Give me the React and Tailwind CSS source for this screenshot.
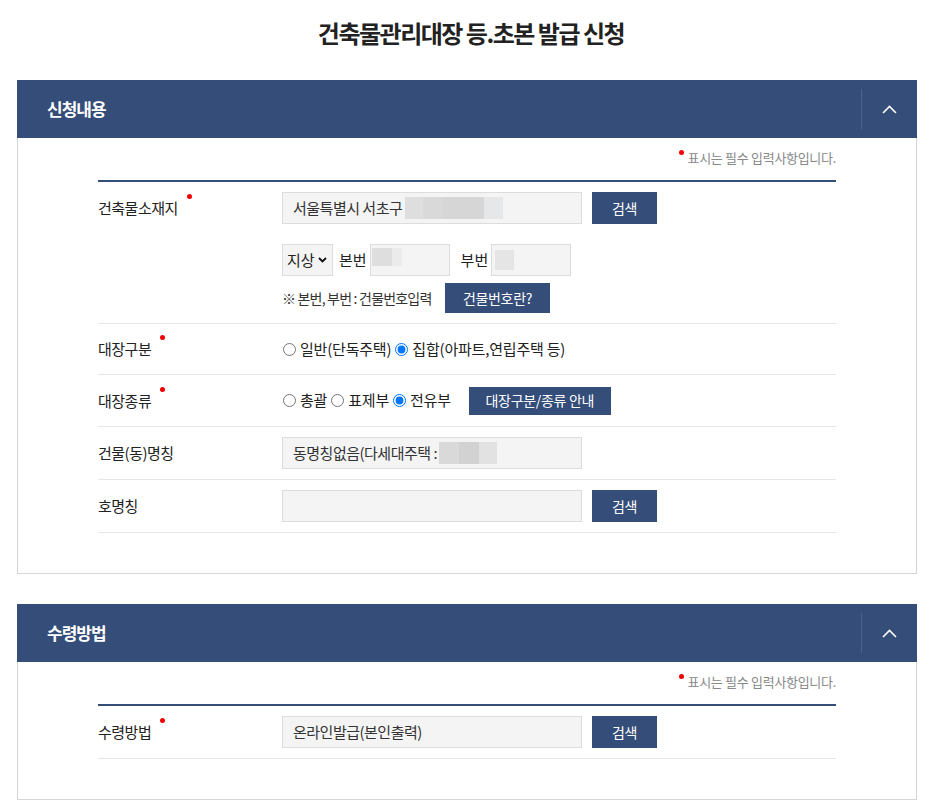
import { useState } from 'react';

const FONT = "font-['Noto_Sans_CJK_KR','Noto_Sans',sans-serif]";

function Dot({ className = '' }) {
  return <span className={`absolute w-[5px] h-[5px] rounded-full bg-[#f00000] ${className}`} />;
}

function Label({ children, required, h }) {
  return (
    <div className={`w-[184px] shrink-0 flex items-center ${h}`}>
      <span className="relative text-[15px] leading-[20px] tracking-[-0.5px] text-[#222]">
        {children}
        {required && <Dot className="-right-[14px] -top-[4px]" />}
      </span>
    </div>
  );
}

function NavyButton({ children, className = '' }) {
  return (
    <button className={`bg-[#344d79] text-white text-[14px] tracking-[-0.3px] flex items-center justify-center ${className}`}>
      {children}
    </button>
  );
}

function TextBox({ children, className = 'w-[300px]' }) {
  return (
    <div className={`h-[32px] border border-[#dcdcdc] bg-[#f4f4f4] flex items-center px-[10px] text-[15px] tracking-[-0.5px] text-[#333] ${className}`}>
      {children}
    </div>
  );
}

function Blur({ w, c, h = 'h-[22px]' }) {
  return <span className={`inline-block ${h} ${w} ${c}`} />;
}

function Radio({ checked, label, name }) {
  return (
    <label className="flex items-center text-[15px] tracking-[-0.2px] text-[#222]">
      <input type="radio" name={name} defaultChecked={checked} className="w-[13px] h-[13px] ml-[1px] mr-[4px] accent-[#0075ff]" />
      <span className="mr-[3px]">{label}</span>
    </label>
  );
}

function Row({ label, required, children, h = 'h-[32px]' }) {
  return (
    <div className="flex py-[10px] border-b border-[#e6e6e6]">
      <Label required={required} h={h}>{label}</Label>
      <div className="flex-1">{children}</div>
    </div>
  );
}

function Panel({ title, children }) {
  const [open, setOpen] = useState(true);
  return (
    <section className="w-[900px]">
      <div className="h-[58px] bg-[#344d79] flex items-center">
        <h2 className="flex-1 pl-[30px] text-white text-[17px] font-bold tracking-[-1px]">{title}</h2>
        <button
          onClick={() => setOpen(!open)}
          className="w-[56px] h-[40px] border-l border-[#4c6290] flex items-center justify-center"
        >
          <svg width="15" height="9" viewBox="0 0 15 9" fill="none">
            <polyline points="1,8 7.5,1.5 14,8" stroke="white" strokeWidth="1.6" />
          </svg>
        </button>
      </div>
      {open && (
        <div className="border border-t-0 border-[#d6d6d6] px-[80px] pt-[11px] pb-[40px]">
          <p className="text-right text-[13px] leading-[18px] tracking-[-0.3px] text-[#888]">
            <span className="relative inline-block w-[8px] h-[10px] mr-[1px]">
              <Dot className="left-0 -top-[3px]" />
            </span>
            표시는 필수 입력사항입니다.
          </p>
          <div className="mt-[13px] border-t-2 border-[#344d79]">{children}</div>
        </div>
      )}
    </section>
  );
}

export default function App() {
  return (
    <div className={`min-h-screen bg-white pb-[12px] ${FONT}`}>
      <h1 className="pt-[18px] text-center text-[24px] leading-[30px] font-bold tracking-[-1.5px] text-[#222]">
        건축물관리대장 등.초본 발급 신청
      </h1>

      <div className="ml-[17px] mt-[32px] flex flex-col gap-[30px]">
        <Panel title="신청내용">
          <Row label="건축물소재지" required>
            <div className="flex">
              <TextBox>
                <span className="mr-[3px]">서울특별시 서초구</span>
                <Blur w="w-[18px]" c="bg-[#dedede]" />
                <Blur w="w-[20px]" c="bg-[#d9d9d9]" />
                <Blur w="w-[41px]" c="bg-[#d6d6d6]" />
                <Blur w="w-[19px]" c="bg-[#e6e7e9]" />
              </TextBox>
              <NavyButton className="ml-[10px] w-[65px] h-[32px]">검색</NavyButton>
            </div>
            <div className="flex items-center mt-[20px] text-[15px] text-[#222]">
              <div className="w-[51px] h-[32px] border border-[#dcdcdc] bg-[#f4f4f4] flex items-center pl-[4px] gap-[3px]">
                <span>지상</span>
                <svg width="9" height="6" viewBox="0 0 9 6" fill="none">
                  <polyline points="1,1 4.5,4.5 8,1" stroke="#111" strokeWidth="1.8" />
                </svg>
              </div>
              <span className="ml-[6px] mr-[3px]">본번</span>
              <div className="w-[80px] h-[32px] border border-[#dcdcdc] bg-[#f4f4f4] flex items-start pt-[3px] pl-[1px]">
                <Blur w="w-[20px]" c="bg-[#dedede]" h="h-[18px]" />
                <Blur w="w-[10px]" c="bg-[#ebebeb]" h="h-[18px]" />
              </div>
              <span className="ml-[11px] mr-[3px]">부번</span>
              <div className="w-[80px] h-[32px] border border-[#dcdcdc] bg-[#f4f4f4] flex items-center pl-[3px]">
                <Blur w="w-[19px]" c="bg-[#e5e5e5]" h="h-[20px]" />
              </div>
            </div>
            <div className="flex items-center mt-[7px]">
              <span className="text-[14px] tracking-[-0.8px] text-[#333] w-[163px]">※ 본번, 부번 : 건물번호입력</span>
              <NavyButton className="w-[105px] h-[30px]">건물번호란?</NavyButton>
            </div>
          </Row>

          <Row label="대장구분" required h="h-[30px]">
            <div className="flex items-center h-[30px]">
              <Radio name="g" label="일반(단독주택)" />
              <Radio name="g" label="집합(아파트,연립주택 등)" checked />
            </div>
          </Row>

          <Row label="대장종류" required h="h-[31px]">
            <div className="flex items-center h-[31px]">
              <Radio name="t" label="총괄" />
              <Radio name="t" label="표제부" />
              <Radio name="t" label="전유부" checked />
              <NavyButton className="ml-[15px] w-[142px] h-[28px]">대장구분/종류 안내</NavyButton>
            </div>
          </Row>

          <Row label="건물(동)명칭">
            <TextBox>
              <span className="mr-[2px]">동명칭없음(다세대주택 :</span>
              <Blur w="w-[20px]" c="bg-[#d9d9d9]" />
              <Blur w="w-[20px]" c="bg-[#d2d2d2]" />
              <Blur w="w-[18px]" c="bg-[#e2e2e2]" />
            </TextBox>
          </Row>

          <Row label="호명칭">
            <div className="flex">
              <TextBox />
              <NavyButton className="ml-[10px] w-[65px] h-[32px]">검색</NavyButton>
            </div>
          </Row>
        </Panel>

        <Panel title="수령방법">
          <Row label="수령방법" required>
            <div className="flex">
              <TextBox>온라인발급(본인출력)</TextBox>
              <NavyButton className="ml-[10px] w-[65px] h-[32px]">검색</NavyButton>
            </div>
          </Row>
        </Panel>
      </div>
    </div>
  );
}
